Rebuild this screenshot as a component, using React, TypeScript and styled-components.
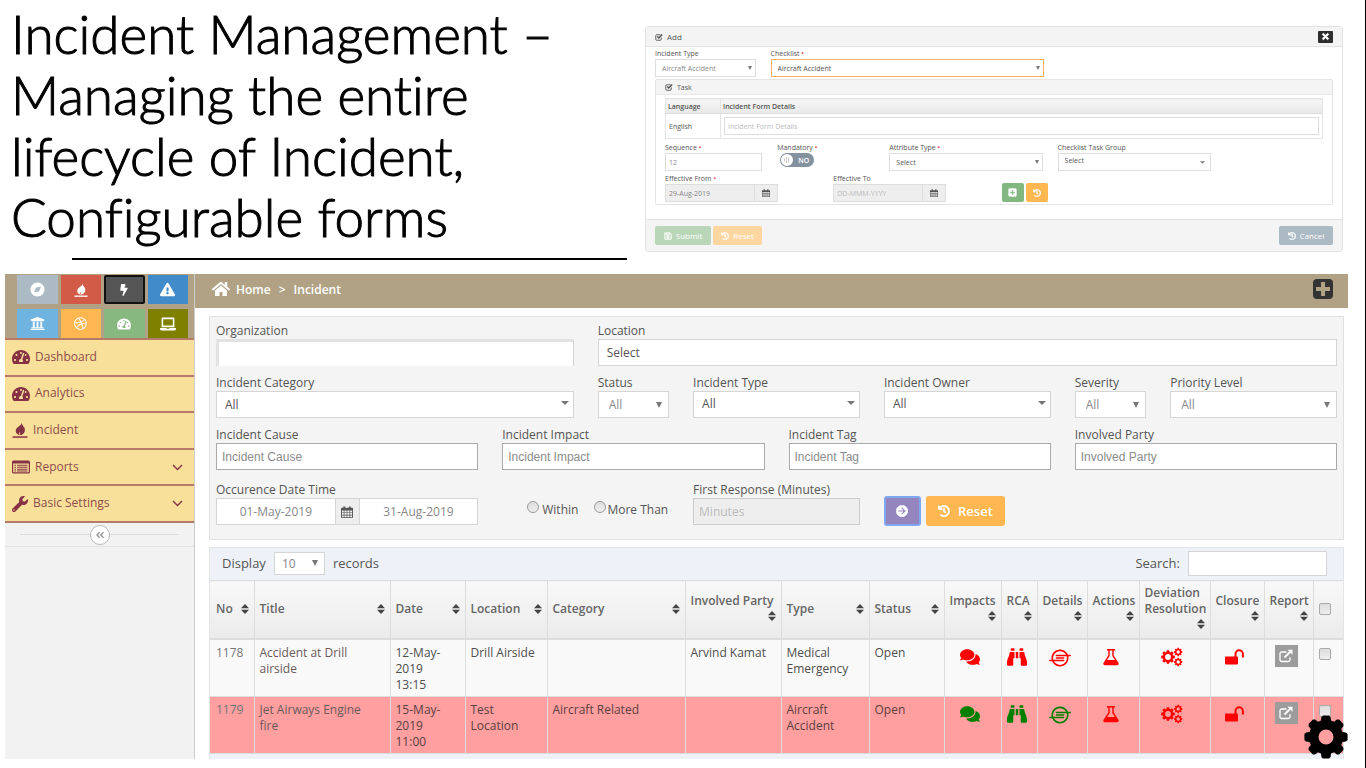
import React from 'react';
import styled, { createGlobalStyle, css } from 'styled-components';
import {
  FaAngleDoubleLeft,
  FaArrowCircleRight,
  FaBinoculars,
  FaBolt,
  FaComments,
  FaDribbble,
  FaExclamationTriangle,
  FaHistory,
  FaHome,
  FaIoxhost,
  FaLaptop,
  FaPlusSquare,
  FaRegSave,
  FaTachometerAlt,
  FaTimes,
  FaUniversity,
  FaWrench,
} from 'react-icons/fa';

const GlobalStyle = createGlobalStyle`
  *, *::before, *::after { box-sizing: border-box; }
  body { margin: 0; background: #fff; }
  body, button, input, select { font-family: "Open Sans", "Noto Sans", sans-serif; }
  a { color: inherit; text-decoration: none; }
`;

/* ---------- icons ---------- */

type IconProps = { size?: number };

const FlameIcon = ({ size = 16 }: IconProps) => (
  <svg width={size} height={size} viewBox="0 0 16 16" fill="currentColor" aria-hidden="true">
    <path d="M9.600 0c.6 1.600-.5 2.700-2.200 3.900C5.300 5.400 3.600 6.800 3.700 9c.1 2.400 1.900 3.800 4.200 4.300-.9-1.100-1.100-2.200-.3-3.300.5 1 .7 2 .3 3.300 2.900-.6 5.100-2.600 5-5.400 0-1.800-1-2.900-2-4.100C10.200 2.700 9.800 1.500 9.600 0z" />
    <rect x="0.500" y="14.300" width="15" height="1.500" />
  </svg>
);

const CompassIcon = ({ size = 15 }: IconProps) => (
  <svg width={size} height={size} viewBox="0 0 16 16" fill="currentColor" aria-hidden="true">
    <path fillRule="evenodd" d="M8 .5a7.500 7.500 0 1 0 0 15a7.500 7.500 0 1 0 0-15zM6.500 5.800L11.800 5 9.500 10.200 4.200 11z" />
  </svg>
);

const LockIcon = () => (
  <svg width="19" height="16" viewBox="0 0 19 16" aria-hidden="true">
    <rect x="0" y="7.500" width="13" height="8" rx="1" fill="currentColor" />
    <path d="M10.500 8V5a3.700 3.700 0 0 1 7.400 0v3.500" fill="none" stroke="currentColor" strokeWidth="2" />
  </svg>
);

const CheckIcon = ({ size = 8 }: IconProps) => (
  <svg width={size} height={size} viewBox="0 0 16 16" fill="none" stroke="currentColor" aria-hidden="true">
    <path d="M12.500 9v3.500a2 2 0 0 1-2 2h-7a2 2 0 0 1-2-2v-7a2 2 0 0 1 2-2H11" strokeWidth="1.800" />
    <path d="M4.500 7l3 3.200L14.500 3" strokeWidth="2.800" />
  </svg>
);

const ListIcon = ({ size = 18 }: IconProps) => (
  <svg width={size} height={size} viewBox="0 0 18 18" fill="currentColor" aria-hidden="true">
    <path
      fillRule="evenodd"
      d="M1.500 2.500h15A1.500 1.500 0 0 1 18 4v10a1.500 1.500 0 0 1-1.500 1.500h-15A1.500 1.500 0 0 1 0 14V4a1.500 1.500 0 0 1 1.500-1.500zM1.200 5.500v8.300a.5.500 0 0 0 .5.500h14.600a.5.500 0 0 0 .5-.5V5.500z"
    />
    <path d="M2.500 6.800h1.500v1H2.500zM5 6.800h10.500v1H5zM2.500 8.800h1.500v1H2.500zM5 8.800h10.500v1H5zM2.500 10.800h1.500v1H2.500zM5 10.800h10.500v1H5zM2.500 12.600h1.500v.8H2.500zM5 12.600h10.500v.8H5z" />
  </svg>
);

const CalendarIcon = ({ size = 12 }: IconProps) => (
  <svg width={size} height={size} viewBox="0 0 13 13" fill="currentColor" aria-hidden="true">
    <path
      fillRule="evenodd"
      d="M1 2h1.500V.5h2V2h4V.5h2V2H12a1 1 0 0 1 1 1v9a1 1 0 0 1-1 1H1a1 1 0 0 1-1-1V3a1 1 0 0 1 1-1zM1 5v2h2V5zM3.700 5v2h2.400V5zM6.800 5v2h2.400V5zM9.900 5v2H12V5zM1 7.700v1.800h2V7.700zM3.700 7.700v1.800h2.400V7.700zM6.800 7.700v1.800h2.400V7.700zM9.900 7.700v1.800H12V7.700zM1 10.200v1.900h2v-1.900zM3.700 10.200v1.900h2.400v-1.900zM6.800 10.200v1.900h2.400v-1.900zM9.900 10.200v1.900H12v-1.900z"
    />
  </svg>
);

const FlaskIcon = ({ size = 18 }: IconProps) => (
  <svg width={size} height={size} viewBox="0 0 18 18" aria-hidden="true">
    <path
      d="M5 1.700h8M7 1.700v6L2.200 15c-.6 1 0 1.500.8 1.500h12c.8 0 1.400-.5.8-1.500L11 7.700v-6"
      fill="none"
      stroke="currentColor"
      strokeWidth="1.400"
    />
    <path d="M4.500 12h9l2.500 4.200H2z" fill="currentColor" />
  </svg>
);

const ExternalIcon = ({ size = 14 }: IconProps) => (
  <svg width={size} height={size} viewBox="0 0 14 14" fill="none" stroke="currentColor" aria-hidden="true">
    <path d="M7.500 3H2.700A1.700 1.700 0 0 0 1 4.700v6.100a1.700 1.700 0 0 0 1.700 1.700h6.600a1.700 1.700 0 0 0 1.700-1.700V8.300" strokeWidth="1.300" />
    <path d="M5.500 8.500L11.500 2.500" strokeWidth="1.900" />
    <path d="M8.500.8h5v5z" fill="currentColor" stroke="none" />
  </svg>
);

const ChevronIcon = () => (
  <svg width="11" height="7" viewBox="0 0 11 7" fill="none" stroke="currentColor" strokeWidth="1.400" aria-hidden="true">
    <path d="M1 1l4.500 4.500L10 1" />
  </svg>
);

const SortIcon = () => (
  <svg width="8" height="10" viewBox="0 0 8 10" fill="#444" aria-hidden="true">
    <path d="M4 0l4 4.200H0zM4 10L0 5.800h8z" />
  </svg>
);

/* Outline of an eight-toothed gear with a round hole. */
const gear = (cx: number, cy: number, outer: number, body: number, hole: number) => {
  const shoulder = outer * 0.94;
  const corners: [number, number][] = [
    [body, -17],
    [shoulder, -13],
    [outer, -8],
    [outer, 8],
    [shoulder, 13],
    [body, 17],
  ];
  const points: string[] = [];
  for (let i = 0; i < 8; i += 1) {
    corners.forEach(([r, deg]) => {
      const a = (i * 45 + deg) * (Math.PI / 180);
      points.push(`${(cx + r * Math.cos(a)).toFixed(2)} ${(cy + r * Math.sin(a)).toFixed(2)}`);
    });
  }
  return `M${points.join('L')}ZM${cx} ${cy - hole}a${hole} ${hole} 0 1 0 0 ${2 * hole}a${hole} ${hole} 0 1 0 0 ${-2 * hole}Z`;
};

const settingsGear = gear(22, 22, 21.8, 17.2, 7.5);
const largeCog = gear(7, 10, 6.9, 5.2, 2.9);
const upperCog = gear(17.2, 5, 4.2, 3.1, 1.7);
const lowerCog = gear(17.2, 15, 4.2, 3.1, 1.7);

const GearIcon = () => (
  <svg width="44" height="44" viewBox="0 0 44 44" aria-hidden="true">
    <path d={settingsGear} fillRule="evenodd" />
  </svg>
);

const CogsIcon = () => (
  <svg width="22" height="20" viewBox="0 0 22 20" fill="currentColor" aria-hidden="true">
    <path d={largeCog} fillRule="evenodd" />
    <path d={upperCog} fillRule="evenodd" />
    <path d={lowerCog} fillRule="evenodd" />
  </svg>
);

/* ---------- slide ---------- */

const Slide = styled.main`
  display: flex;
  flex-direction: column;
  min-height: 100vh;
  border-right: 1px solid #000;
  color: #555;
  font-size: 12px;
`;

const Intro = styled.section`
  display: grid;
  grid-template-columns: minmax(0, 634fr) minmax(0, 698fr);
  align-items: start;
  min-height: 274px;
  padding: 0 22px 0 11px;
`;

const Heading = styled.div`
  padding: 3px 18px 0 0;
`;

const Title = styled.h1`
  margin: 0;
  color: #000;
  font: 300 53px/61px Lato, "Open Sans", sans-serif;
  font-variant-ligatures: none;
  -webkit-text-stroke: 1px #000;
`;

const Rule = styled.hr`
  height: 2px;
  margin: 11px 0 0 61px;
  border: 0;
  background: #000;
`;

/* ---------- form primitives ---------- */

const Field = styled.div<{ $span: number }>`
  display: flex;
  flex-direction: column;
  min-width: 0;
  grid-column: span ${p => p.$span};
`;

const Label = styled.label<{ $small?: boolean }>`
  color: #555;
  font-size: ${p => (p.$small ? 7 : 12)}px;
  line-height: ${p => (p.$small ? 11 : 17)}px;
  white-space: nowrap;
`;

const Star = styled.span`
  color: #e33;
`;

const controlStyle = css<{ $small?: boolean }>`
  width: 100%;
  min-width: 0;
  height: ${p => (p.$small ? 18 : 27)}px;
  margin: 0;
  border: 1px solid ${p => (p.$small ? '#ddd' : '#d5d5d5')};
  border-radius: 0;
  outline: 0;
  background: #fff;
  color: #555;
  font-size: ${p => (p.$small ? 7 : 12)}px;
`;

const TextInput = styled.input<{ $small?: boolean; $plain?: boolean; $center?: boolean }>`
  ${controlStyle}
  padding: 0 ${p => (p.$small ? 3 : 5)}px;
  text-align: ${p => (p.$center ? 'center' : 'left')};
  color: #888;
  ${p => p.$plain && css`
    border-color: #aaa;
    font-family: "Liberation Sans", Arial, sans-serif;
  `}
  &::placeholder { color: ${p => (p.$plain ? '#8c8c8c' : '#bbb')}; opacity: 1; }
  &:disabled { background: #eee; border-color: ${p => (p.$small ? '#ddd' : '#ccc')}; }
`;

const SunkenInput = styled(TextInput)`
  border-width: 3px 1px 0 3px;
  border-color: #e2e2e2 #d0d0d0 #fff #e2e2e2;
`;

const SelectWrap = styled.div`
  display: grid;
  align-items: center;
  min-width: 0;
  > * { grid-area: 1 / 1; }
`;

const SelectBox = styled.select<{ $small?: boolean; $muted?: boolean; $raised?: boolean; $focus?: boolean }>`
  ${controlStyle}
  appearance: none;
  padding: 0 16px ${p => (p.$raised ? 3 : 0)}px ${p => (p.$small ? 6 : 8)}px;
  ${p => p.$muted && css`color: #888;`}
  ${p => p.$muted && !p.$small && css`padding-left: 10px;`}
  ${p => p.$focus && css`border-color: #f5b06a;`}
`;

const Arrow = styled.svg<{ $inset: number }>`
  justify-self: end;
  margin-right: ${p => p.$inset}px;
  pointer-events: none;
  fill: #777;
`;

type PickProps = {
  id: string;
  value: string;
  small?: boolean;
  muted?: boolean;
  raised?: boolean;
  focus?: boolean;
  arrow?: 'tall' | 'wide' | 'none';
};

const Pick = ({ id, value, small, muted, raised, focus, arrow = 'tall' }: PickProps) => (
  <SelectWrap>
    <SelectBox id={id} defaultValue={value} $small={small} $muted={muted} $raised={raised} $focus={focus}>
      <option>{value}</option>
    </SelectBox>
    {arrow === 'tall' && (
      <Arrow $inset={small ? 4 : 7} width={small ? 4 : 6} height={small ? 4 : 6} viewBox="0 0 6 6">
        <path d="M0 0h6L3 6z" />
      </Arrow>
    )}
    {arrow === 'wide' && (
      <Arrow $inset={small ? 6 : 5} width={small ? 5 : 8} height={small ? 3 : 8} viewBox={small ? '0 0 8 4' : '0 0 8 8'}>
        <path d="M0 0h8L4 4z" />
      </Arrow>
    )}
  </SelectWrap>
);

const Group = styled.div<{ $max?: number }>`
  display: flex;
  max-width: ${p => (p.$max ? `${p.$max}px` : 'none')};
`;

const Addon = styled.button<{ $small?: boolean }>`
  display: flex;
  flex: 0 0 23px;
  align-items: center;
  justify-content: center;
  padding: 0;
  border: solid ${p => (p.$small ? '#ddd' : '#d5d5d5')};
  border-width: ${p => (p.$small ? '1px 1px 1px 0' : '1px 0')};
  background: #eee;
  color: #555;
`;

const Button = styled.button<{ $bg: string; $small?: boolean; $ring?: boolean; $w: number }>`
  display: inline-flex;
  align-items: center;
  justify-content: center;
  gap: ${p => (p.$small ? 4 : 8)}px;
  width: ${p => p.$w}px;
  height: ${p => (p.$small ? 19 : 30)}px;
  padding: 0;
  border: ${p => (p.$ring ? '2px solid #7fa8f0' : '0')};
  border-radius: ${p => (p.$small ? 2 : 3)}px;
  background: ${p => p.$bg};
  color: #fff;
  font-size: ${p => (p.$small ? 8 : 13)}px;
  font-weight: ${p => (p.$small ? 400 : 600)};
  svg { stroke: currentColor; stroke-width: 20; }
`;

/* ---------- dialog ---------- */

const Dialog = styled.section`
  margin-top: 26px;
  border: 1px solid #e2e2e2;
  border-radius: 3px;
  background: #fff;
`;

const DialogHead = styled.header`
  display: flex;
  align-items: center;
  gap: 4px;
  height: 20px;
  padding: 0 9px;
  border-bottom: 1px solid #e2e2e2;
  background: #f4f4f4;
  font-size: 8px;
`;

const CloseButton = styled.button`
  display: grid;
  place-items: center;
  width: 15px;
  height: 12px;
  margin-left: auto;
  padding: 0;
  border: 0;
  border-radius: 1px;
  background: #2e2e2e;
  color: #fff;
  svg { stroke: currentColor; stroke-width: 50; }
`;

const DialogBody = styled.div`
  padding: 1px 9px 14px;
`;

const SmallGrid = styled.div`
  display: grid;
  grid-template-columns: repeat(12, minmax(0, 1fr));
  align-items: end;
  column-gap: 15px;
  margin-bottom: 2px;
`;

const TaskPanel = styled.section`
  border: 1px solid #e4e4e4;
  border-radius: 2px;
`;

const TaskHead = styled.header`
  display: flex;
  align-items: center;
  gap: 4px;
  height: 15px;
  padding: 0 9px;
  border-bottom: 1px solid #e8e8e8;
  background: #f4f4f4;
  font-size: 7px;
`;

const TaskBody = styled.div`
  padding: 3px 9px 0;
`;

const LangTable = styled.table`
  width: 100%;
  margin-bottom: 3px;
  border: 1px solid #e4e4e4;
  border-collapse: collapse;
  font-size: 7px;
  th {
    height: 15px;
    padding: 0 2px;
    border-bottom: 1px solid #ddd;
    background: linear-gradient(#f6f6f6, #e9e9e9);
    font-weight: 600;
    text-align: left;
  }
  td {
    height: 25px;
    padding: 0 3px;
  }
  th:first-child, td:first-child {
    width: 55px;
    border-right: 1px solid #e4e4e4;
  }
`;

const Switch = styled.label`
  display: inline-flex;
  align-items: center;
  align-self: start;
  width: 34px;
  height: 14px;
  margin: 0 0 4px 3px;
  padding: 1px;
  border-radius: 7px;
  background: #8492a0;
  color: #fff;
  font-size: 7px;
  font-weight: 600;
  gap: 5px;
  input {
    appearance: none;
    width: 12px;
    height: 12px;
    margin: 0;
    border: 3px solid #fff;
    border-radius: 50%;
    background: repeating-linear-gradient(90deg, #ccc 0 1px, #fff 1px 2px);
  }
`;

const ButtonPair = styled.div<{ $gap: number }>`
  display: flex;
  gap: ${p => p.$gap}px;
`;

const DialogFoot = styled.footer`
  display: flex;
  justify-content: space-between;
  padding: 6px 9px;
  border-top: 1px solid #e2e2e2;
  background: #f4f4f4;
`;

const AddDialog = () => (
  <Dialog aria-label="Add">
    <DialogHead>
      <CheckIcon />
      Add
      <CloseButton aria-label="Close">
        <FaTimes size={9} />
      </CloseButton>
    </DialogHead>
    <DialogBody>
      <SmallGrid>
        <Field $span={2}>
          <Label $small htmlFor="d-type">Incident Type</Label>
          <Pick id="d-type" value="Aircraft Accident" small muted />
        </Field>
        <Field $span={5}>
          <Label $small htmlFor="d-check">Checklist <Star>•</Star></Label>
          <Pick id="d-check" value="Aircraft Accident" small focus />
        </Field>
      </SmallGrid>
      <TaskPanel>
        <TaskHead>
          <CheckIcon />
          Task
        </TaskHead>
        <TaskBody>
          <LangTable>
            <thead>
              <tr><th>Language</th><th>Incident Form Details</th></tr>
            </thead>
            <tbody>
              <tr>
                <td>English</td>
                <td><TextInput $small aria-label="Incident Form Details" placeholder="Incident Form Details" /></td>
              </tr>
            </tbody>
          </LangTable>
          <SmallGrid>
            <Field $span={2}>
              <Label $small htmlFor="d-seq">Sequence <Star>•</Star></Label>
              <TextInput $small id="d-seq" defaultValue="12" />
            </Field>
            <Field $span={2}>
              <Label $small htmlFor="d-mand">Mandatory <Star>•</Star></Label>
              <Switch>
                <input id="d-mand" type="checkbox" />
                NO
              </Switch>
            </Field>
            <Field $span={3}>
              <Label $small htmlFor="d-attr">Attribute Type <Star>•</Star></Label>
              <Pick id="d-attr" value="Select" small />
            </Field>
            <Field $span={3}>
              <Label $small htmlFor="d-group">Checklist Task Group</Label>
              <Pick id="d-group" value="Select" small arrow="wide" raised />
            </Field>
          </SmallGrid>
          <SmallGrid>
            <Field $span={3}>
              <Label $small htmlFor="d-from">Effective From <Star>•</Star></Label>
              <Group $max={113}>
                <TextInput $small disabled id="d-from" defaultValue="29-Aug-2019" />
                <Addon $small aria-label="Pick start date"><CalendarIcon size={8} /></Addon>
              </Group>
            </Field>
            <Field $span={3}>
              <Label $small htmlFor="d-to">Effective To</Label>
              <Group $max={113}>
                <TextInput $small disabled id="d-to" placeholder="DD-MMM-YYYY" />
                <Addon $small aria-label="Pick end date"><CalendarIcon size={8} /></Addon>
              </Group>
            </Field>
            <Field $span={3}>
              <ButtonPair $gap={2}>
                <Button $small $w={22} $bg="#82b77f" aria-label="Add task"><FaPlusSquare size={9} /></Button>
                <Button $small $w={22} $bg="#ffb752" aria-label="Reset task"><FaHistory size={8} /></Button>
              </ButtonPair>
            </Field>
          </SmallGrid>
        </TaskBody>
      </TaskPanel>
    </DialogBody>
    <DialogFoot>
      <ButtonPair $gap={2}>
        <Button $small $w={56} $bg="#b9d6b8"><FaRegSave size={8} />Submit</Button>
        <Button $small $w={49} $bg="#ffd6a0"><FaHistory size={8} />Reset</Button>
      </ButtonPair>
      <Button $small $w={54} $bg="#abbac3"><FaHistory size={8} />Cancel</Button>
    </DialogFoot>
  </Dialog>
);

/* ---------- application ---------- */

const AppFrame = styled.section`
  display: grid;
  position: relative;
  grid-template-columns: 190px minmax(0, 1fr);
  margin: 0 17px 9px 5px;
`;

const Sidebar = styled.aside`
  border-right: 1px solid #ccc;
  background: #f2f2f2;
`;

const Shortcuts = styled.div`
  display: grid;
  grid-template-columns: repeat(4, 1fr);
  gap: 5px 3px;
  height: 64px;
  padding: 1px 6px 0 12px;
  background: #b1a285;
`;

const Shortcut = styled.button<{ $bg: string; $active?: boolean }>`
  display: grid;
  place-items: center;
  padding: 0;
  border: ${p => (p.$active ? '2px solid #111' : '0')};
  border-radius: ${p => (p.$active ? 2 : 0)}px;
  background: ${p => p.$bg};
  color: #fff;
`;

const Nav = styled.nav`
  display: grid;
  grid-auto-rows: 1fr;
  height: 185px;
  border-top: 2px solid #b57a68;
  background: #f8e09b;
`;

const NavItem = styled.a`
  display: flex;
  align-items: center;
  gap: 5px;
  padding: 0 11px 2px 7px;
  border-bottom: 2px solid #b57a68;
  color: #863244;
  font-size: 12px;
  > svg { flex: none; position: relative; top: 1px; }
`;

const NavText = styled.span`
  flex: 1;
  color: #8d4c4c;
`;

const Collapse = styled.div`
  display: grid;
  grid-template-columns: 1fr 20px 1fr;
  align-items: center;
  height: 24px;
  padding: 0 15px;
  border-bottom: 1px solid #e4e4e4;
  &::before, &::after {
    content: "";
    border-top: 1px solid #ddd;
  }
`;

const CollapseButton = styled.button`
  display: grid;
  place-items: center;
  width: 20px;
  height: 20px;
  padding: 0;
  border: 1px solid #bbb;
  border-radius: 50%;
  background: #fff;
  color: #999;
`;

const TopBar = styled.header`
  display: flex;
  align-items: center;
  gap: 5px;
  height: 34px;
  padding: 0 15px 4px 17px;
  background: #b1a285;
  color: #fff;
  font-size: 12px;
  font-weight: 600;
`;

const Crumb = styled.a`
  display: flex;
  align-items: center;
  gap: 6px;
`;

const Separator = styled.span`
  margin: 0 3px;
`;

const AddButton = styled.button`
  display: grid;
  place-items: center;
  width: 20px;
  height: 20px;
  margin-left: auto;
  padding: 0;
  border: 0;
  border-radius: 4px;
  background: #333;
  color: #b1a285;
`;

const Filters = styled.form`
  display: grid;
  gap: 8px;
  margin: 8px 4px 7px 14px;
  padding: 5px 6px 14px;
  border: 1px solid #e0e0e0;
  background: #f4f4f4;
`;

const FilterRow = styled.div<{ $gap?: number }>`
  display: grid;
  grid-template-columns: repeat(12, minmax(0, 1fr));
  align-items: start;
  column-gap: 24px;
  margin-top: ${p => p.$gap || 0}px;
`;

const Radios = styled.div`
  display: flex;
  grid-column: span 2;
  align-items: center;
  gap: 16px;
  height: 44px;
  padding: 12px 0 0 25px;
`;

const RadioLabel = styled.label<{ $tight?: boolean }>`
  display: flex;
  align-items: center;
  gap: ${p => (p.$tight ? 1 : 3)}px;
  font-size: 12px;
  white-space: nowrap;
  input {
    appearance: none;
    width: 12px;
    height: 12px;
    margin: 0 0 4px;
    border: 1px solid #999;
    border-radius: 50%;
    background: linear-gradient(#ddd, #eee);
  }
`;

const FilterButtons = styled.div`
  display: flex;
  gap: 5px;
  grid-column: span 3;
  height: 44px;
  padding-top: 15px;
`;

const TablePanel = styled.section`
  margin: 0 4px 0 14px;
  padding-bottom: 5px;
  border: solid #e2e5e8;
  border-width: 1px 1px 0;
  background: #eef2f8;
`;

const TableTools = styled.div`
  display: flex;
  align-items: center;
  gap: 8px;
  height: 32px;
  padding: 0 16px 2px 12px;
  font-size: 13px;
`;

const PageSize = styled.div`
  width: 51px;
  select { height: 23px; padding-left: 7px; }
`;

const ToolLabel = styled.label`
  font-size: 13px;
`;

const SearchInput = styled(TextInput)`
  width: 139px;
  height: 25px;
`;

const Spacer = styled.span`
  flex: 1;
`;

const Records = styled.table`
  width: 100%;
  border-collapse: collapse;
  table-layout: fixed;
  font-size: 12px;
  line-height: 16px;
  th, td {
    border: 1px solid #ddd;
    padding: 5px 5px 3px;
  }
  th:first-child, td:first-child { border-left: 0; padding-left: 6px; }
  th:last-child, td:last-child { border-right: 0; }
  th {
    height: 58px;
    padding: 0 5px;
    border-bottom: 2px solid #ddd;
    background: linear-gradient(#f8f8f8, #ebebeb);
    color: #666;
    font-weight: 600;
    text-align: left;
    vertical-align: middle;
    white-space: nowrap;
  }
`;

const Row = styled.tr<{ $alert?: boolean }>`
  height: 57px;
  background: ${p => (p.$alert ? '#ff9f9f' : '#f9f9f9')};
  td { vertical-align: top; color: ${p => (p.$alert ? '#5d4040' : '#4f4f4f')}; }
`;

const HeadCell = styled.div<{ $stack?: boolean }>`
  display: flex;
  flex-direction: ${p => (p.$stack ? 'column' : 'row')};
  align-items: ${p => (p.$stack ? 'stretch' : 'center')};
  justify-content: space-between;
  svg { align-self: ${p => (p.$stack ? 'flex-end' : 'center')}; margin: ${p => (p.$stack ? '2px 0 4px' : '0')}; }
`;

const IdLink = styled.a`
  color: #777;
`;

const IconLink = styled.button<{ $tone: string }>`
  display: grid;
  place-items: center;
  width: 100%;
  height: 20px;
  margin-top: 2px;
  padding: 0 5px 0 0;
  border: 0;
  background: none;
  color: ${p => p.$tone};
`;

const ReportLink = styled.button`
  display: grid;
  place-items: center;
  width: 23px;
  height: 22px;
  margin: 0 0 0 5px;
  padding: 0;
  border: 0;
  background: #9c9c9c;
  color: #fff;
`;

const Tick = styled.input`
  appearance: none;
  display: block;
  width: 12px;
  height: 12px;
  margin: 3px 0 0;
  border: 1px solid #aaa;
  border-radius: 2px;
  background: linear-gradient(#ddd, #eee);
  th & { margin: 0; }
`;

const SettingsButton = styled.button`
  position: absolute;
  right: 0;
  bottom: 0;
  display: block;
  padding: 0;
  border: 0;
  background: none;
  svg { display: block; }
`;

const shortcuts = [
  { name: 'Explore', bg: '#abbac3', icon: <CompassIcon size={15} /> },
  { name: 'Fire', bg: '#d15b47', icon: <FlameIcon size={14} /> },
  { name: 'Quick actions', bg: '#555', icon: <FaBolt size={12} />, active: true },
  { name: 'Warnings', bg: '#428bca', icon: <FaExclamationTriangle size={15} /> },
  { name: 'Institutions', bg: '#6fb3e0', icon: <FaUniversity size={15} /> },
  { name: 'Activity', bg: '#ffb752', icon: <FaDribbble size={13} /> },
  { name: 'Performance', bg: '#87b87f', icon: <FaTachometerAlt size={14} /> },
  { name: 'Devices', bg: '#808000', icon: <FaLaptop size={16} /> },
];

const navItems = [
  { text: 'Dashboard', icon: <FaTachometerAlt size={18} /> },
  { text: 'Analytics', icon: <FaTachometerAlt size={18} /> },
  { text: 'Incident', icon: <FlameIcon size={16} /> },
  { text: 'Reports', icon: <ListIcon />, open: true },
  { text: 'Basic Settings', icon: <FaWrench size={16} />, open: true },
];

const columns: { title: string; width: number; stack?: boolean }[] = [
  { title: 'No', width: 44 },
  { title: 'Title', width: 136 },
  { title: 'Date', width: 75 },
  { title: 'Location', width: 82 },
  { title: 'Category', width: 138 },
  { title: 'Involved Party', width: 96, stack: true },
  { title: 'Type', width: 88 },
  { title: 'Status', width: 75 },
  { title: 'Impacts', width: 57, stack: true },
  { title: 'RCA', width: 36, stack: true },
  { title: 'Details', width: 50, stack: true },
  { title: 'Actions', width: 52, stack: true },
  { title: 'Deviation\nResolution', width: 71, stack: true },
  { title: 'Closure', width: 54, stack: true },
  { title: 'Report', width: 49, stack: true },
];

const HeadText = styled.span`
  white-space: pre;
`;

const records = [
  {
    id: '1178',
    title: 'Accident at Drill airside',
    date: '12-May-2019 13:15',
    location: 'Drill Airside',
    category: '',
    party: 'Arvind Kamat',
    type: 'Medical Emergency',
    status: 'Open',
    tone: '#f00',
  },
  {
    id: '1179',
    title: 'Jet Airways Engine fire',
    date: '15-May-2019 11:00',
    location: 'Test Location',
    category: 'Aircraft Related',
    party: '',
    type: 'Aircraft Accident',
    status: 'Open',
    tone: '#008000',
    alert: true,
  },
];

const DateCell = styled.td`
  && { padding-right: 20px; }
`;

const TitleCell = styled.td`
  && { padding-right: 24px; color: #6c5a5a; }
`;

const IncidentFilters = () => (
  <Filters onSubmit={e => e.preventDefault()}>
    <FilterRow>
      <Field $span={4}>
        <Label htmlFor="org">Organization</Label>
        <SunkenInput id="org" />
      </Field>
      <Field $span={8}>
        <Label htmlFor="loc">Location</Label>
        <Pick id="loc" value="Select" arrow="none" />
      </Field>
    </FilterRow>
    <FilterRow>
      <Field $span={4}>
        <Label htmlFor="cat">Incident Category</Label>
        <Pick id="cat" value="All" arrow="wide" />
      </Field>
      <Field $span={1}>
        <Label htmlFor="status">Status</Label>
        <Pick id="status" value="All" muted />
      </Field>
      <Field $span={2}>
        <Label htmlFor="type">Incident Type</Label>
        <Pick id="type" value="All" arrow="wide" raised />
      </Field>
      <Field $span={2}>
        <Label htmlFor="owner">Incident Owner</Label>
        <Pick id="owner" value="All" arrow="wide" raised />
      </Field>
      <Field $span={1}>
        <Label htmlFor="sev">Severity</Label>
        <Pick id="sev" value="All" muted />
      </Field>
      <Field $span={2}>
        <Label htmlFor="prio">Priority Level</Label>
        <Pick id="prio" value="All" muted />
      </Field>
    </FilterRow>
    <FilterRow>
      {['Incident Cause', 'Incident Impact', 'Incident Tag', 'Involved Party'].map(name => (
        <Field $span={3} key={name}>
          <Label htmlFor={name}>{name}</Label>
          <TextInput $plain id={name} placeholder={name} />
        </Field>
      ))}
    </FilterRow>
    <FilterRow $gap={3}>
      <Field $span={3}>
        <Label htmlFor="from">Occurence Date Time</Label>
        <Group>
          <TextInput $center id="from" defaultValue="01-May-2019" />
          <Addon type="button" aria-label="Pick dates"><CalendarIcon /></Addon>
          <TextInput $center aria-label="To date" defaultValue="31-Aug-2019" />
        </Group>
      </Field>
      <Radios>
        <RadioLabel><input type="radio" name="response" />Within</RadioLabel>
        <RadioLabel $tight><input type="radio" name="response" />More Than</RadioLabel>
      </Radios>
      <Field $span={2}>
        <Label htmlFor="mins">First Response (Minutes)</Label>
        <TextInput disabled id="mins" placeholder="Minutes" />
      </Field>
      <FilterButtons>
        <Button $bg="#9585bf" $w={37} $ring aria-label="Search incidents"><FaArrowCircleRight size={12} /></Button>
        <Button type="button" $bg="#ffb752" $w={79}><FaHistory size={12} />Reset</Button>
      </FilterButtons>
    </FilterRow>
  </Filters>
);

const IncidentTable = () => (
  <TablePanel>
    <TableTools>
      <ToolLabel htmlFor="size">Display</ToolLabel>
      <PageSize><Pick id="size" value="10" muted /></PageSize>
      records
      <Spacer />
      <ToolLabel htmlFor="search">Search:</ToolLabel>
      <SearchInput id="search" />
    </TableTools>
    <Records>
      <colgroup>
        {columns.map(c => <col key={c.title} width={c.width} />)}
        <col width={30} />
      </colgroup>
      <thead>
        <tr>
          {columns.map(c => (
            <th key={c.title} scope="col">
              <HeadCell $stack={c.stack}>
                <HeadText>{c.title}</HeadText>
                <SortIcon />
              </HeadCell>
            </th>
          ))}
          <th><Tick type="checkbox" aria-label="Select all" /></th>
        </tr>
      </thead>
      <tbody>
        {records.map(r => (
          <Row key={r.id} $alert={r.alert}>
            <td><IdLink href="#">{r.id}</IdLink></td>
            <TitleCell>{r.title}</TitleCell>
            <DateCell>{r.date}</DateCell>
            <td>{r.location}</td>
            <td>{r.category}</td>
            <td>{r.party}</td>
            <td>{r.type}</td>
            <td>{r.status}</td>
            <td><IconLink $tone={r.tone} aria-label="Impacts"><FaComments size={20} /></IconLink></td>
            <td><IconLink $tone={r.tone} aria-label="RCA"><FaBinoculars size={20} /></IconLink></td>
            <td><IconLink $tone={r.tone} aria-label="Details"><FaIoxhost size={22} /></IconLink></td>
            <td><IconLink $tone="#f00" aria-label="Actions"><FlaskIcon /></IconLink></td>
            <td><IconLink $tone="#f00" aria-label="Resolution"><CogsIcon /></IconLink></td>
            <td><IconLink $tone="#f00" aria-label="Closure"><LockIcon /></IconLink></td>
            <td><ReportLink aria-label="Report"><ExternalIcon /></ReportLink></td>
            <td><Tick type="checkbox" aria-label={`Select ${r.id}`} /></td>
          </Row>
        ))}
      </tbody>
    </Records>
  </TablePanel>
);

const App = () => (
  <Slide>
    <GlobalStyle />
    <Intro>
      <Heading>
        <Title>Incident Management – Managing the entire lifecycle of Incident, Configurable forms</Title>
        <Rule />
      </Heading>
      <AddDialog />
    </Intro>
    <AppFrame>
      <Sidebar>
        <Shortcuts>
          {shortcuts.map(s => (
            <Shortcut key={s.name} aria-label={s.name} $bg={s.bg} $active={s.active}>{s.icon}</Shortcut>
          ))}
        </Shortcuts>
        <Nav>
          {navItems.map(n => (
            <NavItem href="#" key={n.text}>
              {n.icon}
              <NavText>{n.text}</NavText>
              {n.open && <ChevronIcon />}
            </NavItem>
          ))}
        </Nav>
        <Collapse>
          <CollapseButton aria-label="Collapse menu"><FaAngleDoubleLeft size={10} /></CollapseButton>
        </Collapse>
      </Sidebar>
      <div>
        <TopBar>
          <Crumb href="#"><FaHome size={18} />Home</Crumb>
          <Separator>&gt;</Separator>
          <Crumb href="#">Incident</Crumb>
          <AddButton aria-label="Add incident">
            <svg width="14" height="14" viewBox="0 0 14 14" fill="currentColor" aria-hidden="true">
              <path d="M5 0h4v5h5v4H9v5H5V9H0V5h5z" />
            </svg>
          </AddButton>
        </TopBar>
        <IncidentFilters />
        <IncidentTable />
      </div>
      <SettingsButton aria-label="Settings"><GearIcon /></SettingsButton>
    </AppFrame>
  </Slide>
);

export default App;
